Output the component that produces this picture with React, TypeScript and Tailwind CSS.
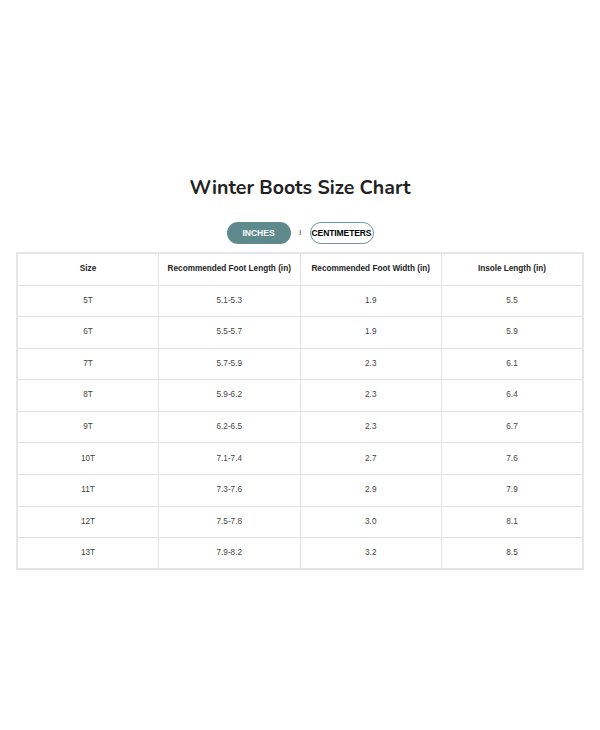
const rows = [
  ['5T', '5.1-5.3', '1.9', '5.5'],
  ['6T', '5.5-5.7', '1.9', '5.9'],
  ['7T', '5.7-5.9', '2.3', '6.1'],
  ['8T', '5.9-6.2', '2.3', '6.4'],
  ['9T', '6.2-6.5', '2.3', '6.7'],
  ['10T', '7.1-7.4', '2.7', '7.6'],
  ['11T', '7.3-7.6', '2.9', '7.9'],
  ['12T', '7.5-7.8', '3.0', '8.1'],
  ['13T', '7.9-8.2', '3.2', '8.5'],
];

const headers = ['Size', 'Recommended Foot Length (in)', 'Recommended Foot Width (in)', 'Insole Length (in)'];

export default function App() {
  return (
    <div className="w-[600px] h-[730px] bg-white flex flex-col items-center pt-[175px]">
      <h1 className="text-[19.5px] leading-[26px] font-bold text-[#222] font-['Nunito','Lato',sans-serif]">
        Winter Boots Size Chart
      </h1>

      <div className="flex items-center mt-[21px] font-['Liberation_Sans',Arial,sans-serif] text-[8.5px] font-bold">
        <button className="w-[64px] h-[22px] rounded-full bg-[#5e8a8e] text-white">INCHES</button>
        <span className="w-[19px] text-center text-[#444] font-normal text-[8px]">I</span>
        <button className="w-[64px] h-[22px] px-0 rounded-full bg-white border border-[#6f9a9e] text-black tracking-[-0.1px]">
          CENTIMETERS
        </button>
      </div>

      <table className="mt-[8px] w-[568px] border-collapse border-2 border-[#e6e6e6] font-['Liberation_Sans',Arial,sans-serif] text-[8.2px] text-[#444] table-fixed">
        <thead>
          <tr className="h-[32px]">
            {headers.map((h) => (
              <th key={h} className="border border-[#e2e2e2] font-bold text-center text-[#222]">
                {h}
              </th>
            ))}
          </tr>
        </thead>
        <tbody>
          {rows.map((r) => (
            <tr key={r[0]} className="h-[31.6px]">
              {r.map((c, i) => (
                <td key={i} className="border border-[#e2e2e2] text-center">
                  {c}
                </td>
              ))}
            </tr>
          ))}
        </tbody>
      </table>
    </div>
  );
}
